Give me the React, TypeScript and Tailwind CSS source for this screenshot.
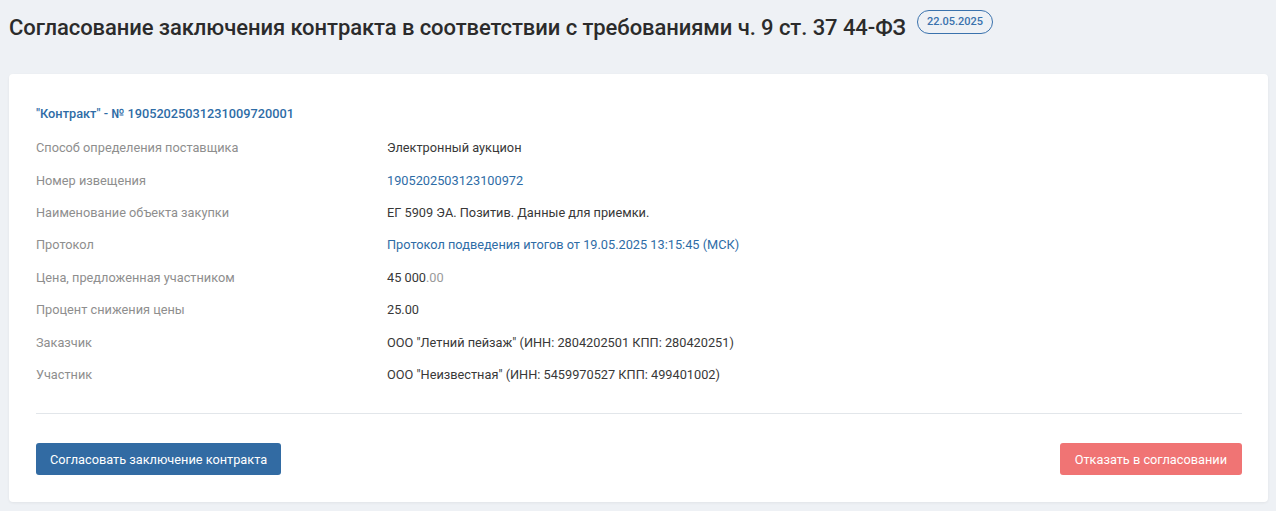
import React from "react";

const rows: { label: string; value: React.ReactNode }[] = [
  { label: "Способ определения поставщика", value: "Электронный аукцион" },
  { label: "Номер извещения", value: <span className="text-[#2e6ca6]">1905202503123100972</span> },
  { label: "Наименование объекта закупки", value: "ЕГ 5909 ЭА. Позитив. Данные для приемки." },
  { label: "Протокол", value: <span className="text-[#2e6ca6]">Протокол подведения итогов от 19.05.2025 13:15:45 (МСК)</span> },
  { label: "Цена, предложенная участником", value: <span>45 000<span className="text-[#9a9a9a]">.00</span></span> },
  { label: "Процент снижения цены", value: "25.00" },
  { label: "Заказчик", value: 'ООО "Летний пейзаж" (ИНН: 2804202501 КПП: 280420251)' },
  { label: "Участник", value: 'ООО "Неизвестная" (ИНН: 5459970527 КПП: 499401002)' },
];

export default function App() {
  return (
    <div
      className="w-[1276px] h-[511px] bg-[#eef1f5] pl-[9px] pr-[8px] pt-[10px]"
      style={{ fontFamily: "Roboto, 'Noto Sans', sans-serif" }}
    >
      <div className="flex items-start gap-[11px]">
        <h1 className="text-[22px] leading-[36px] font-medium text-[#2b2b2b] tracking-[-0.075px]">
          Согласование заключения контракта в соответствии с требованиями ч. 9 ст. 37 44-ФЗ
        </h1>
        <span className="h-[24px] px-[9px] rounded-full border border-[#3a72ad] text-[#3a72ad] text-[11px] leading-[22px] font-medium">
          22.05.2025
        </span>
      </div>
      <div className="mt-[28px] bg-white rounded-[4px] shadow-[0_1px_3px_rgba(0,0,0,0.06)] pl-[27px] pr-[26px] pt-[31px] pb-[27px]">
        <div className="text-[12.75px] leading-[18px] font-medium text-[#2e6ca6]">
          "Контракт" - № 19052025031231009720001
        </div>
        <div className="mt-[9px] flex flex-col">
          {rows.map((r) => (
            <div key={r.label} className="flex h-[32.43px] items-center text-[12.75px] leading-[18px]">
              <div className="w-[351px] text-[#8e8e8e]">{r.label}</div>
              <div className="text-[#383838]">{r.value}</div>
            </div>
          ))}
        </div>
        <div className="mt-[22px] border-t border-[#e2e6ea]" />
        <div className="mt-[29px] flex justify-between">
          <button className="h-[32px] px-[14px] rounded-[3px] bg-[#326ba3] text-white text-[12.75px]">
            Согласовать заключение контракта
          </button>
          <button className="h-[32px] px-[15px] rounded-[3px] bg-[#f07474] text-white text-[12.75px]">
            Отказать в согласовании
          </button>
        </div>
      </div>
    </div>
  );
}
